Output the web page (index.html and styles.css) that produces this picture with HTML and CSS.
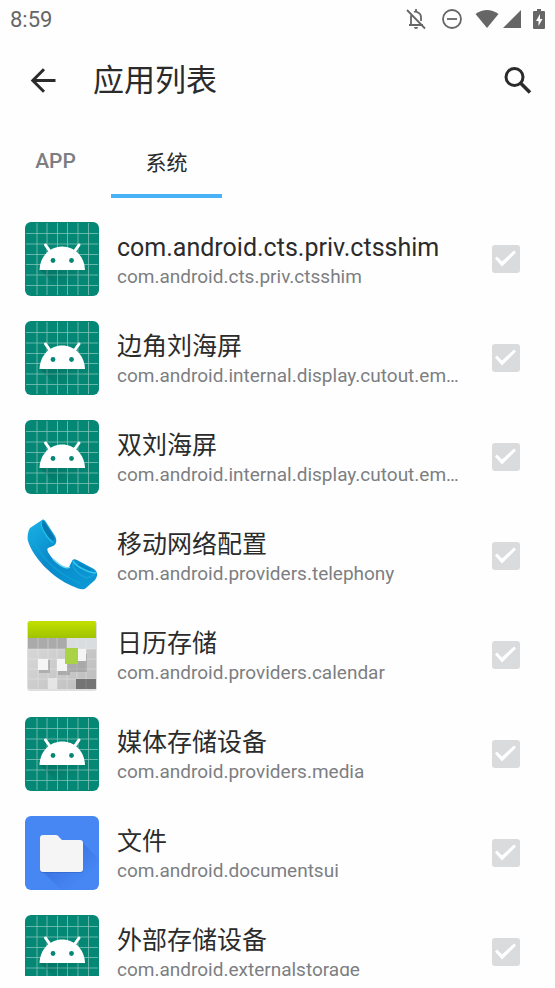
FILE: index.html
```html
<!DOCTYPE html>
<html lang="zh-CN">
  <head>
    <meta charset="UTF-8" />
    <meta name="viewport" content="width=device-width, initial-scale=1.0" />
    <title>应用列表</title>
    <link rel="stylesheet" href="styles.css">
  </head>
  <body>
    <!-- shared app icons -->
    <svg class="sprite" aria-hidden="true">
      <defs>
        <linearGradient id="robot-shadow" x1="0" y1="0" x2="1" y2="1">
          <stop offset="0" stop-color="#004d40" stop-opacity="0.4" />
          <stop offset="0.6" stop-color="#004d40" stop-opacity="0" />
        </linearGradient>
        <linearGradient id="phone-blue" x1="0" y1="0" x2="1" y2="1">
          <stop offset="0" stop-color="#19b4e6" />
          <stop offset="0.45" stop-color="#0a8aca" />
          <stop offset="1" stop-color="#0b9ad6" />
        </linearGradient>
        <linearGradient id="calendar-green" x1="0" y1="0" x2="0" y2="1">
          <stop offset="0" stop-color="#c3e000" />
          <stop offset="1" stop-color="#9fc400" />
        </linearGradient>
        <linearGradient id="calendar-grey" x1="0" y1="0" x2="1" y2="1">
          <stop offset="0" stop-color="#dedede" />
          <stop offset="1" stop-color="#bcbcbc" />
        </linearGradient>
        <linearGradient id="files-shadow" x1="0" y1="0" x2="1" y2="1">
          <stop offset="0.3" stop-color="#2a56c6" stop-opacity="0.4" />
          <stop offset="0.75" stop-color="#2a56c6" stop-opacity="0" />
        </linearGradient>
      </defs>
      <symbol id="icon-android" viewBox="0 0 74 74">
        <rect width="74" height="74" rx="6" fill="#058775" />
        <path d="M1 11.5h72M1 22h72M1 32.5h72M1 42.5h72M1 53h72M1 63.5h72M12 1v72M22 1v72M32.5 1v72M42.5 1v72M53 1v72M63.5 1v72" stroke="#7dc4b8" stroke-width="0.8" />
        <path d="M15 48L41 74H68A6 6 0 0 0 74 68V62L56 40Z" fill="url(#robot-shadow)" />
        <path d="M20.5 23l5 7M54 23l-5 7" stroke="#fff" stroke-width="3" stroke-linecap="round" />
        <path d="M14.5 48C15 34 25 24.500 37.200 24.500S59.500 34 60 48Z" fill="#fff" />
        <circle cx="28" cy="38.500" r="2.400" fill="#058775" />
        <circle cx="46.500" cy="38.500" r="2.400" fill="#058775" />
      </symbol>
      <symbol id="icon-phone" viewBox="0 0 74 74">
        <path d="M17 1C18 0 20 1 21 3L30 17C32 21 32 25 28 27L23 29C21 31 24 35 28 40C34 46 40 49 44 48L47 42C48 40 50 40 52 41L69 50C73 53 73 57 70 61L61 69C58 72 52 69 47 67C28 59 8 39 3 22C2 18 3 12 5 9Z" fill="url(#phone-blue)" />
        <path d="M17 2C18 1 20 3 21 5L29 18C30 20 29 21 28 22L22 17C19 13 16 6 17 2Z" fill="#0878b0" />
        <path d="M17 2C14 6 20 17 28 24" fill="none" stroke="#18bdea" stroke-width="1.500" />
        <path d="M5 12C9 30 27 53 55 64" fill="none" stroke="#12a5dc" stroke-width="2" opacity="0.500" />
        <path d="M48 42C51 47 63 54 71 54" fill="none" stroke="#35c8ef" stroke-width="1.500" />
        <path d="M48 44C47 50 55 57 62 59L69 56" fill="none" stroke="#22aee0" stroke-width="1.500" opacity="0.600" />
        <path d="M28 40C37 49 42 50 45 48" fill="none" stroke="#71d8f2" stroke-width="1.500" />
        <path d="M53 45L66 51" stroke="#0a85bd" stroke-width="2" />
      </symbol>
      <symbol id="icon-calendar" viewBox="0 0 74 74">
        <rect x="2" y="3" width="70" height="70" rx="3" fill="#000" opacity="0.12" />
        <rect x="3" y="3" width="68" height="68" rx="2" fill="url(#calendar-grey)" />
        <path d="M3 20H42V31H3Z" fill="#aaa" />
        <path d="M42 20H71V31H42Z" fill="#d9dde0" />
        <path d="M3 31h68M3 41h68M3 51h68M3 61h68M13 20v51M23 20v51M32 20v51M42 20v51M52 20v51M61 20v51" stroke="#eee" stroke-width="0.800" opacity="0.500" />
        <path d="M3 20V5A2 2 0 0 1 5 3H69A2 2 0 0 1 71 5V20Z" fill="url(#calendar-green)" />
        <path d="M14 42h11v13H14zM33 43h12v14H33zM44 36h18v18H44z" fill="#555" opacity="0.250" />
        <path d="M13 41h10v11H13zM32 41h10v12H32zM52 31h9v12h-9z" fill="#f5f5f5" />
        <path d="M23 60h9v11h-9z" fill="#e5e5e5" />
        <path d="M40 30h13v16H40z" fill="#a9d345" />
        <path d="M51 61h20v10H51z" fill="#747474" />
        <path d="M61 61v10" stroke="#858585" />
      </symbol>
      <symbol id="icon-files" viewBox="0 0 74 74">
        <rect width="74" height="74" rx="6" fill="#4687f4" />
        <path d="M16 54L36 74H68A6 6 0 0 0 74 68V43L58 27Z" fill="url(#files-shadow)" />
        <path d="M18 20H32L38 25H55A3 3 0 0 1 58 28V54A3 3 0 0 1 55 57H18A3 3 0 0 1 15 54V23A3 3 0 0 1 18 20Z" fill="#2f62be" opacity="0.600" />
        <path d="M18 19H31Q33 19 34 21L37 24H55A3 3 0 0 1 58 27V53A3 3 0 0 1 55 56H18A3 3 0 0 1 15 53V22A3 3 0 0 1 18 19Z" fill="#f5f5f5" />
      </symbol>
    </svg>

    <div class="status-bar">
      <span>8:59</span>
      <div class="status-icons">
        <svg width="22" height="22" viewBox="0 0 22 22" fill="none" stroke="#666" stroke-width="1.800">
          <path d="M2 2L20 20.500M4 17H18M6 17V9Q6 7 7 6M9 4Q11 3 13 4.500Q16 6 16 9V13M11 1V4" />
          <path d="M9 19H13Q13 21 11 21T9 19" fill="#666" stroke="none" />
        </svg>
        <svg width="22" height="22" viewBox="0 0 22 22" fill="none" stroke="#666" stroke-width="1.800">
          <circle cx="11" cy="11" r="9" />
          <path d="M6 11H16" />
        </svg>
        <div class="signal">
          <svg width="24" height="20" viewBox="0 0 24 20" fill="#666">
            <path d="M0.500 5Q12 -3 23.500 5L12 19Z" />
          </svg>
          <svg width="18" height="20" viewBox="0 0 18 20" fill="#666">
            <path d="M0 19L18 1V19Z" />
          </svg>
        </div>
        <svg width="12" height="20" viewBox="0 0 12 20">
          <path d="M4 0H8V2H11Q12 2 12 3V19Q12 20 11 20H1Q0 20 0 19V3Q0 2 1 2H4Z" fill="#666" />
          <path d="M7 5L3 12H5.500V17L9.500 10H7Z" fill="#fff" />
        </svg>
      </div>
    </div>

    <header class="toolbar">
      <button class="icon-btn" aria-label="返回">
        <svg width="26" height="26" viewBox="0 0 26 26" fill="none" stroke="#2b2b2b" stroke-width="3">
          <path d="M25.500 12.500H3M14 1.300L2.800 12.500L14 23.700" />
        </svg>
      </button>
      <h1>应用列表</h1>
      <button class="icon-btn" aria-label="搜索">
        <svg width="28" height="28" viewBox="0 0 28 28" fill="none" stroke="#2b2b2b" stroke-width="3">
          <circle cx="10.500" cy="10" r="8.500" />
          <path d="M17 16.500L26 25.500" stroke-width="3.500" />
        </svg>
      </button>
    </header>

    <nav class="tabs">
      <button class="tab">APP</button>
      <button class="tab active">系统</button>
    </nav>

    <ul class="app-list">
      <li>
        <label class="app">
          <svg class="app-icon"><use href="#icon-android" /></svg>
          <span class="app-text">
            <span class="app-name">com.android.cts.priv.ctsshim</span>
            <span class="app-package">com.android.cts.priv.ctsshim</span>
          </span>
          <input type="checkbox" checked disabled />
        </label>
      </li>
      <li>
        <label class="app">
          <svg class="app-icon"><use href="#icon-android" /></svg>
          <span class="app-text">
            <span class="app-name">边角刘海屏</span>
            <span class="app-package">com.android.internal.display.cutout.emulation.corner</span>
          </span>
          <input type="checkbox" checked disabled />
        </label>
      </li>
      <li>
        <label class="app">
          <svg class="app-icon"><use href="#icon-android" /></svg>
          <span class="app-text">
            <span class="app-name">双刘海屏</span>
            <span class="app-package">com.android.internal.display.cutout.emulation.double</span>
          </span>
          <input type="checkbox" checked disabled />
        </label>
      </li>
      <li>
        <label class="app">
          <svg class="app-icon"><use href="#icon-phone" /></svg>
          <span class="app-text">
            <span class="app-name">移动网络配置</span>
            <span class="app-package">com.android.providers.telephony</span>
          </span>
          <input type="checkbox" checked disabled />
        </label>
      </li>
      <li>
        <label class="app">
          <svg class="app-icon"><use href="#icon-calendar" /></svg>
          <span class="app-text">
            <span class="app-name">日历存储</span>
            <span class="app-package">com.android.providers.calendar</span>
          </span>
          <input type="checkbox" checked disabled />
        </label>
      </li>
      <li>
        <label class="app">
          <svg class="app-icon"><use href="#icon-android" /></svg>
          <span class="app-text">
            <span class="app-name">媒体存储设备</span>
            <span class="app-package">com.android.providers.media</span>
          </span>
          <input type="checkbox" checked disabled />
        </label>
      </li>
      <li>
        <label class="app">
          <svg class="app-icon"><use href="#icon-files" /></svg>
          <span class="app-text">
            <span class="app-name">文件</span>
            <span class="app-package">com.android.documentsui</span>
          </span>
          <input type="checkbox" checked disabled />
        </label>
      </li>
      <li>
        <label class="app">
          <svg class="app-icon"><use href="#icon-android" /></svg>
          <span class="app-text">
            <span class="app-name">外部存储设备</span>
            <span class="app-package">com.android.externalstorage</span>
          </span>
          <input type="checkbox" checked disabled />
        </label>
      </li>
    </ul>
  </body>
</html>
```
FILE: styles.css
```css
* {
  box-sizing: border-box;
}

body {
  font-family: Roboto, "Noto Sans CJK SC", sans-serif;
  background: #fefefe;
  color: #2b2b2b;
  margin: 0;
  padding-bottom: 12px;
  height: 100vh;
  display: flex;
  flex-direction: column;
  overflow: hidden;
}

button {
  background: none;
  border: none;
  padding: 0;
  color: inherit;
  font: inherit;
  cursor: pointer;
}

svg {
  display: block;
  flex: none;
}

.sprite {
  position: absolute;
  width: 0;
  height: 0;
}

.status-bar {
  flex: none;
  height: 38px;
  padding: 0 10px;
  display: flex;
  align-items: center;
  justify-content: space-between;
  color: #666;
  font-size: 22px;
}

.status-icons {
  display: flex;
  align-items: center;
  gap: 12px;
}

.status-icons > svg:first-child {
  margin-right: 2px;
}

.signal {
  display: flex;
  gap: 4px;
}

.toolbar {
  flex: none;
  height: 86px;
  padding: 0 23px 0 30px;
  display: flex;
  align-items: center;
}

.toolbar h1 {
  flex: 1;
  margin: 0 0 0 37px;
  font-size: 31px;
  font-weight: 400;
  line-height: 40px;
}

.tabs {
  flex: none;
  height: 74px;
  display: flex;
}

.tab {
  width: 111px;
  padding-top: 4px;
  border-bottom: 4px solid transparent;
  color: #7c7e82;
  font-size: 21px;
  font-weight: 500;
}

.tab.active {
  border-color: #49b1f5;
  color: #2b2b2b;
  font-weight: 400;
}

.app-list {
  flex: 1;
  min-height: 0;
  overflow: hidden;
  margin: 0;
  padding: 11px 0 0;
  list-style: none;
}

.app {
  height: 99px;
  padding: 0 35px 0 25px;
  display: flex;
  align-items: center;
}

.app-icon {
  width: 74px;
  height: 74px;
}

.app-text {
  flex: 1;
  min-width: 0;
  margin: 0 28px 0 18px;
  padding-top: 4px;
  display: flex;
  flex-direction: column;
}

.app-name,
.app-package {
  overflow: hidden;
  text-overflow: ellipsis;
  white-space: nowrap;
}

.app-name {
  font-size: 25px;
  line-height: 32px;
}

.app-package {
  color: #7c7e82;
  font-size: 19px;
  line-height: 26px;
}

input[type="checkbox"] {
  appearance: none;
  flex: none;
  width: 28px;
  height: 28px;
  margin: 0;
  border-radius: 3px;
  background: #dadbdd;
}

input[type="checkbox"]:checked::before {
  content: "";
  display: block;
  height: 100%;
  background: #fff;
  clip-path: polygon(3px 14px, 5px 12px, 10px 17px, 22px 6px, 24px 8px, 10px 22px);
}
```
